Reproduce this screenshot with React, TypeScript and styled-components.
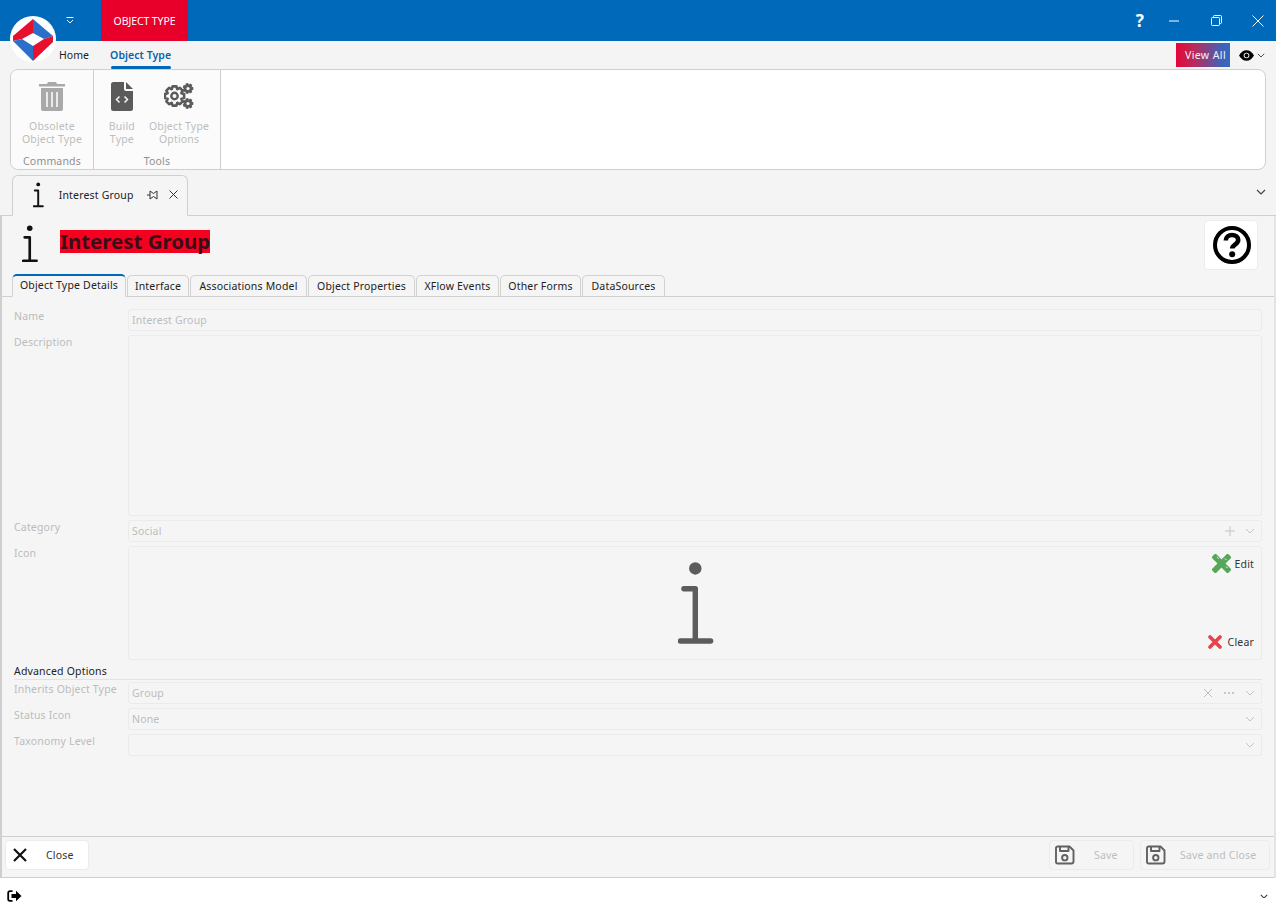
import React from 'react';
import styled, { createGlobalStyle } from 'styled-components';

const Global = createGlobalStyle`
  html, body { margin: 0; padding: 0; }
  body { font-family: "Noto Sans", "Open Sans", "Liberation Sans", sans-serif; font-size: 10.5px; letter-spacing: 0.18px; background: #f4f4f4; color: #222; }
  #root { height: 912px; }
  * { box-sizing: border-box; }
`;

const Page = styled.div`
  position: relative; width: 1276px; height: 912px; overflow: hidden;
  display: flex; flex-direction: column; background: #f4f4f4;
`;
const TitleBar = styled.header`
  height: 41px; flex: none; background: #0069b9; display: flex; align-items: stretch; padding-left: 64px; color: #fff;
`;
const QuickMenu = styled.button`
  all: unset; width: 12px; display: flex; align-items: center; justify-content: center; margin-right: 25px;
`;
const ContextTab = styled.div`
  width: 87px; background: #e8002a; color: #fff; display: flex; align-items: center; justify-content: center; font-size: 10.5px; letter-spacing: -0.1px;
`;
const WindowControls = styled.div`
  margin-left: auto; margin-right: -4px; display: flex; align-items: center;
`;
const WindowButton = styled.button<{ $w: number }>`
  all: unset; width: ${p => p.$w}px; height: 41px; display: flex; align-items: center; justify-content: center; color: #fff;
`;
const HelpMark = styled.span`
  font: 700 17px "Noto Sans", sans-serif;
`;
const LogoWrap = styled.div`
  position: absolute; left: 10px; top: 16px; width: 46px; height: 46px;
`;
const MenuRow = styled.nav`
  height: 28px; flex: none; display: flex; align-items: center; padding-left: 59px; position: relative;
`;
const MenuItem = styled.div<{ $active?: boolean }>`
  height: 28px; margin-right: 21px; display: flex; align-items: center; position: relative; font-size: 10.5px; letter-spacing: 0.05px;
  color: ${p => (p.$active ? '#0a62ab' : '#1f1f1f')}; font-weight: ${p => (p.$active ? 600 : 400)};
  &::after {
    content: ''; display: ${p => (p.$active ? 'block' : 'none')}; position: absolute; left: 1px; right: 0; bottom: 0; height: 3px; border-radius: 2px; background: #0069b9;
  }
`;
const MenuRight = styled.div`
  margin-left: auto; display: flex; align-items: center; padding-right: 11px;
`;
const ViewAll = styled.div`
  width: 54px; height: 24px; display: flex; align-items: center; justify-content: flex-end; padding-right: 4px; color: #f2f2f2; font-size: 10.5px; letter-spacing: 0.4px;
  background: linear-gradient(90deg, #e4073a 0%, #b92b5c 35%, #3f62ba 85%, #3569bf 100%);
`;
const EyeMenu = styled.div`
  display: flex; align-items: center; gap: 3px; margin-left: 9px;
`;
const Ribbon = styled.section`
  height: 101px; flex: none; margin: 0 10px; background: #fff; border: 1px solid #cfcfcf; border-radius: 8px; display: flex;
`;
const RibbonGroup = styled.div<{ $w: number }>`
  width: ${p => p.$w}px; border-right: 1px solid #cfcfcf; display: flex; flex-direction: column; align-items: center; background: #fbfbfb;
  &:first-child { border-radius: 8px 0 0 8px; }
`;
const GroupButtons = styled.div<{ $shift?: number }>`
  flex: 1; display: flex; justify-content: center; gap: 14px; padding: 11px 0 0 ${p => p.$shift ?? 0}px;
`;
const RibbonButton = styled.div`
  display: flex; flex-direction: column; align-items: center; text-align: center; color: #bdbdbd; line-height: 13px; font-size: 10.5px;
`;
const RibbonIcon = styled.div`
  height: 30px; margin-bottom: 9px; display: flex; align-items: center; justify-content: center;
`;
const GroupLabel = styled.div`
  height: 17px; color: #8f8f8f; font-size: 10.5px; line-height: 18px;
`;
const DocStrip = styled.div`
  height: 46px; flex: none; display: flex; align-items: flex-end; padding: 0 10px 2px 12px; border-bottom: 1px solid #d0d0d0; position: relative;
`;
const DocTab = styled.div`
  width: 176px; height: 41px; margin-bottom: -3px; background: #f5f5f5; border: 1px solid #cfcfcf; border-bottom: 1px solid #f5f5f5; border-radius: 6px 6px 0 0;
  display: flex; align-items: center; padding: 0 0 2px 20px; font-size: 10.5px; color: #222;
`;
const DocTabTitle = styled.span`
  margin-left: 15px; margin-right: 8px; width: 80px; white-space: nowrap;
`;
const DocTabAction = styled.span`
  width: 14px; height: 14px; margin-right: 7px; display: flex; align-items: center; justify-content: center;
`;
const StripChevron = styled.div`
  margin-left: auto; align-self: center; display: flex;
`;
const Panel = styled.main`
  flex: 1; min-height: 0; display: flex; flex-direction: column; background: #f5f5f5; border-left: 2px solid #cfcfcf; border-right: 2px solid #e4e4e4;
`;
const Heading = styled.div`
  height: 59px; flex: none; display: flex; align-items: flex-start; padding: 9px 16px 0 20px;
`;
const HeadingIcon = styled.div`
  width: 16px; margin-right: 22px; display: flex;
`;
const HeadingTitle = styled.h1`
  margin: 5px 0 0; padding: 0; height: 23px; background: #f6001f; color: #3b0d18; font: 700 20.45px/23px "Noto Sans", sans-serif; letter-spacing: 0; white-space: nowrap;
`;
const HelpButton = styled.div`
  margin-left: auto; width: 54px; height: 50px; margin-top: -5px; padding-left: 2px; background: #fff; border-radius: 4px; border: 1px solid #ececec; display: flex; align-items: center; justify-content: center;
`;
const TabBar = styled.div`
  height: 22px; flex: none; display: flex; align-items: flex-end; padding-left: 10px; border-bottom: 1px solid #d0d0d0;
`;
const FormTab = styled.div<{ $w: number; $active?: boolean }>`
  width: ${p => p.$w}px; height: ${p => (p.$active ? 22 : 21)}px; margin-right: 1px; display: flex; align-items: center; justify-content: center; white-space: nowrap; color: #222; font-size: 10.5px;
  border: 1px solid #d2d2d2; border-radius: 5px 5px 0 0; background: #f5f5f5;
  ${p => p.$active ? 'border-top: 2px solid #0069b9; border-bottom: 1px solid #f5f5f5; margin-bottom: -1px; height: 23px; padding-bottom: 3px;' : 'border-bottom: none;'}
`;
const Form = styled.div`
  flex: 1; min-height: 0; padding: 12px 12px 0 12px; display: flex; flex-direction: column; gap: 4px;
`;
const Row = styled.div<{ $h?: number }>`
  display: grid; grid-template-columns: 114px 1fr; height: ${p => p.$h ?? 22}px; flex: none;
`;
const Label = styled.label`
  color: #bcbcbc; font-size: 10.5px; line-height: 14px; white-space: nowrap;
`;
const Field = styled.div`
  border: 1px solid #ebebeb; border-radius: 3px; background: #f5f5f5; display: flex; align-items: center; padding: 0 6px 0 3px; color: #bcbcbc; font-size: 10.5px; position: relative;
`;
const FieldTools = styled.div`
  margin-left: auto; display: flex; align-items: center; gap: 10px;
`;
const IconGlyph = styled.div`
  position: absolute; left: 549px; top: 14px; display: flex;
`;
const IconAction = styled.div<{ $top?: number; $bottom?: number; $gap: number }>`
  position: absolute; right: 7px; ${p => (p.$top !== undefined ? `top: ${p.$top}px;` : '')} ${p => (p.$bottom !== undefined ? `bottom: ${p.$bottom}px;` : '')}
  display: flex; align-items: center; gap: ${p => p.$gap}px; color: #333; font-size: 10.5px;
`;
const SectionTitle = styled.div`
  height: 16px; flex: none; margin: 0 0 -2px 0; color: #222; font-size: 10.5px; line-height: 14px; border-bottom: 1px solid #e2e2e2;
`;
const Footer = styled.div`
  height: 42px; flex: none; display: flex; align-items: center; padding: 0 4px 4px 3px; gap: 6px; border-top: 1px solid #cfcfcf; border-bottom: 1px solid #cfcfcf;
`;
const FooterButton = styled.div<{ $w: number; $light?: boolean }>`
  width: ${p => p.$w}px; height: 30px; display: flex; align-items: center; border-radius: 4px; font-size: 10.5px;
  background: ${p => (p.$light ? '#fff' : '#f5f5f5')}; border: 1px solid ${p => (p.$light ? '#ececec' : '#ebebeb')}; color: ${p => (p.$light ? '#333' : '#bdbdbd')};
`;
const FooterIcon = styled.span<{ $w: number }>`
  width: ${p => p.$w}px; display: flex; justify-content: center; flex: none;
`;
const FooterLabel = styled.span<{ $ml: number }>`
  margin-left: ${p => p.$ml}px; white-space: nowrap;
`;
const Spacer = styled.div`
  flex: 1;
`;
const StatusBar = styled.footer`
  height: 34px; flex: none; background: #fff; display: flex; align-items: center; justify-content: space-between; padding: 2px 8px 0 7px;
`;

const Logo = () => (
  <svg width="46" height="46" viewBox="0 0 46 46">
    <circle cx="23" cy="23" r="23" fill="#fff" />
    <polygon points="3,20 23,3 23,17 12,23 3,25" fill="#e8112d" />
    <polygon points="23,3 43,20 34,23 23,17" fill="#2a6fc9" />
    <polygon points="3,25 12,23 23,30 23,45" fill="#2a6fc9" />
    <polygon points="23,45 23,30 34,23 43,20 43,26" fill="#e8112d" />
  </svg>
);
const InfoGlyph = ({ h, color = '#111', sw = 5.5 }: { h: number; color?: string; sw?: number }) => (
  <svg width={(h * 36) / 86} height={h} viewBox="0 0 36 86" fill="none">
    <circle cx="17.5" cy="7.5" r="6.3" fill={color} />
    <path d="M6 28H17.5V81M2.5 81H33" stroke={color} strokeWidth={sw} strokeLinecap="round" strokeLinejoin="round" />
  </svg>
);
const Chevron = ({ c = '#333', w = 10, sw = 1 }: { c?: string; w?: number; sw?: number }) => (
  <svg width={w} height={w * 0.6} viewBox="0 0 10 6" fill="none">
    <path d="M1 1l4 4 4-4" stroke={c} strokeWidth={sw} />
  </svg>
);
const gearPath = (cx: number, cy: number, r: number, n: number) => {
  const pts: string[] = [];
  for (let i = 0; i < n; i++) {
    const a = (i / n) * Math.PI * 2;
    const s = Math.PI / n;
    const p = (ang: number, rad: number) => `${(cx + Math.cos(ang) * rad).toFixed(2)} ${(cy + Math.sin(ang) * rad).toFixed(2)}`;
    pts.push(p(a - s * 0.95, r * 0.8), p(a - s * 0.5, r * 1.05), p(a + s * 0.5, r * 1.05), p(a + s * 0.95, r * 0.8));
  }
  return 'M' + pts.join('L') + 'Z';
};
const Gears = () => (
  <svg width="30" height="26" viewBox="0 0 30 26" fill="none">
    <path d={gearPath(10.5, 13, 9.3, 8)} stroke="#5b5b5b" strokeWidth="2.6" strokeLinejoin="round" />
    <circle cx="10.5" cy="13" r="3.2" stroke="#5b5b5b" strokeWidth="2.4" />
    <path d={gearPath(24, 5.5, 5.2, 7)} fill="#5b5b5b" />
    <circle cx="24" cy="5.5" r="1.6" fill="#fbfbfb" />
    <path d={gearPath(24, 20.5, 5.2, 7)} fill="#5b5b5b" />
    <circle cx="24" cy="20.5" r="1.6" fill="#fbfbfb" />
  </svg>
);
const Trash = () => (
  <svg width="26" height="29" viewBox="0 0 26 29">
    <path d="M9 0h8l1 2h8v2.4H0V2h8z" fill="#a9a9a9" />
    <path d="M2 6h22v21a2 2 0 0 1-2 2H4a2 2 0 0 1-2-2z" fill="#a9a9a9" />
    <path d="M8 10v15M13 10v15M18 10v15" stroke="#fbfbfb" strokeWidth="1.6" />
  </svg>
);
const CodeFile = () => (
  <svg width="22" height="29" viewBox="0 0 22 29">
    <path d="M2.5 0H13v7a2 2 0 0 0 2 2h7v17.5a2.5 2.5 0 0 1-2.5 2.5h-17A2.5 2.5 0 0 1 0 26.5v-24A2.5 2.5 0 0 1 2.5 0z" fill="#5b5b5b" />
    <path d="M15 0l7 7h-7z" fill="#5b5b5b" />
    <path d="M8.5 14.5L5.5 17.5l3 3M13.5 14.5l3 3-3 3" stroke="#f6f6f6" strokeWidth="1.5" fill="none" />
  </svg>
);
const Floppy = () => (
  <svg width="20" height="20" viewBox="0 0 20 20" fill="none" stroke="#616161" strokeWidth="1.9" strokeLinejoin="round">
    <path d="M2.5 1.5h12l4 4v11a2 2 0 0 1-2 2h-14a1.5 1.5 0 0 1-1.5-1.5V3a1.5 1.5 0 0 1 1.5-1.5z" />
    <path d="M5 1.5v4.5h8.5V1.5" />
    <circle cx="9.8" cy="12.7" r="2.7" />
  </svg>
);
const EditIcon = () => (
  <svg width="19" height="19" viewBox="0 0 19 19">
    <g transform="rotate(45 9.5 9.5)" fill="#58a55c">
      <rect x="6.6" y="-2" width="5.8" height="23" rx="0.6" />
      <rect x="-2" y="6.6" width="23" height="5.8" rx="0.6" />
    </g>
    <path d="M5 3.2l1.6 1.6M14 12.6l1.4 1.4M13 4.6l1.4 1.4" stroke="#f4f4f4" strokeWidth="1" />
  </svg>
);
const ClearIcon = () => (
  <svg width="14" height="14" viewBox="0 0 14 14">
    <path d="M2 2l10 10M12 2L2 12" stroke="#e8434c" strokeWidth="3.6" strokeLinecap="round" />
  </svg>
);
const Eye = () => (
  <svg width="15" height="11" viewBox="0 0 15 11">
    <path d="M0 5.5C2 2 4.6.3 7.5.3S13 2 15 5.5c-2 3.5-4.6 5.2-7.5 5.2S2 9 0 5.5z" fill="#000" />
    <circle cx="7.5" cy="5.5" r="2.8" fill="#f4f4f4" />
    <circle cx="7.5" cy="5.5" r="1.9" fill="#000" />
  </svg>
);
const PinIcon = () => (
  <svg width="11" height="10" viewBox="0 0 11 10" fill="none" stroke="#333" strokeWidth="1">
    <path d="M0 5h3M3 1v8l3.5-2.5L10 9V1L6.5 3.5z" />
  </svg>
);
const HelpCircle = () => (
  <svg width="38" height="38" viewBox="0 0 38 38" fill="none">
    <circle cx="19" cy="19" r="17" stroke="#000" strokeWidth="4" />
    <path d="M12.8 14.5c0-3.5 2.8-5.5 6.200-5.500s6.200 2 6.200 5c0 4.500-6 4.500-6 8.500" stroke="#000" strokeWidth="4.6" />
    <circle cx="19.2" cy="28.2" r="3" fill="#000" />
  </svg>
);
const ExitIcon = () => (
  <svg width="15" height="12" viewBox="0 0 15 12" fill="none">
    <path d="M5.5 1.2H3A1.8 1.8 0 0 0 1.2 3v6A1.8 1.8 0 0 0 3 10.8h2.5" stroke="#000" strokeWidth="1.8" />
    <path d="M9 .8L14.5 6 9 11.2V8H4.5V4H9z" fill="#000" />
  </svg>
);

const tabs: [string, number][] = [['Interface', 62], ['Associations Model', 117], ['Object Properties', 107], ['XFlow Events', 83], ['Other Forms', 81], ['DataSources', 83]];

export default function App() {
  return (
    <Page>
      <Global />
      <TitleBar>
        <QuickMenu>
          <svg width="8" height="7" viewBox="0 0 8 7" fill="none" stroke="#fff"><path d="M.5.5h7M1 3l3 3 3-3" /></svg>
        </QuickMenu>
        <ContextTab>OBJECT TYPE</ContextTab>
        <WindowControls>
          <WindowButton $w={24}><HelpMark>?</HelpMark></WindowButton>
          <WindowButton $w={44}>
            <svg width="10" height="2" viewBox="0 0 10 2"><path d="M0 1h10" stroke="#fff" /></svg>
          </WindowButton>
          <WindowButton $w={40}>
            <svg width="11" height="11" viewBox="0 0 11 11" fill="none" stroke="#fff"><rect x=".5" y="2.5" width="8" height="8" rx="1" /><path d="M2.5 2.5V1.5a1 1 0 0 1 1-1h6a1 1 0 0 1 1 1v6a1 1 0 0 1-1 1h-1" /></svg>
          </WindowButton>
          <WindowButton $w={44}>
            <svg width="12" height="12" viewBox="0 0 12 12" stroke="#fff"><path d="M.5.5l11 11M11.5.5l-11 11" /></svg>
          </WindowButton>
        </WindowControls>
      </TitleBar>
      <LogoWrap><Logo /></LogoWrap>
      <MenuRow>
        <MenuItem>Home</MenuItem>
        <MenuItem $active>Object Type</MenuItem>
        <MenuRight>
          <ViewAll>View All</ViewAll>
          <EyeMenu><Eye /><Chevron c="#444" w={8} sw={1.2} /></EyeMenu>
        </MenuRight>
      </MenuRow>
      <Ribbon>
        <RibbonGroup $w={83}>
          <GroupButtons>
            <RibbonButton><RibbonIcon><Trash /></RibbonIcon>Obsolete<br />Object Type</RibbonButton>
          </GroupButtons>
          <GroupLabel>Commands</GroupLabel>
        </RibbonGroup>
        <RibbonGroup $w={127}>
          <GroupButtons $shift={4}>
            <RibbonButton><RibbonIcon><CodeFile /></RibbonIcon>Build<br />Type</RibbonButton>
            <RibbonButton><RibbonIcon><Gears /></RibbonIcon>Object Type<br />Options</RibbonButton>
          </GroupButtons>
          <GroupLabel>Tools</GroupLabel>
        </RibbonGroup>
      </Ribbon>
      <DocStrip>
        <DocTab>
          <InfoGlyph h={26} sw={6.5} />
          <DocTabTitle>Interest Group</DocTabTitle>
          <DocTabAction><PinIcon /></DocTabAction>
          <DocTabAction>
            <svg width="9" height="9" viewBox="0 0 9 9" stroke="#333"><path d="M.5.5l8 8M8.5.5l-8 8" /></svg>
          </DocTabAction>
        </DocTab>
        <StripChevron><Chevron c="#444" w={10} sw={1.2} /></StripChevron>
      </DocStrip>
      <Panel>
        <Heading>
          <HeadingIcon><InfoGlyph h={38} sw={6} /></HeadingIcon>
          <HeadingTitle>Interest Group</HeadingTitle>
          <HelpButton><HelpCircle /></HelpButton>
        </Heading>
        <TabBar>
          <FormTab $w={114} $active>Object Type Details</FormTab>
          {tabs.map(([t, w]) => <FormTab key={t} $w={w}>{t}</FormTab>)}
        </TabBar>
        <Form>
          <Row><Label>Name</Label><Field>Interest Group</Field></Row>
          <Row $h={181}><Label>Description</Label><Field /></Row>
          <Row>
            <Label>Category</Label>
            <Field>Social
              <FieldTools>
                <svg width="10" height="10" viewBox="0 0 10 10" stroke="#c4c4c4"><path d="M5 0v10M0 5h10" /></svg>
                <Chevron c="#c4c4c4" />
              </FieldTools>
            </Field>
          </Row>
          <Row $h={114}>
            <Label>Icon</Label>
            <Field>
              <IconGlyph><InfoGlyph h={85} color="#5c5c5c" /></IconGlyph>
              <IconAction $top={7} $gap={3}><EditIcon />Edit</IconAction>
              <IconAction $bottom={10} $gap={6}><ClearIcon />Clear</IconAction>
            </Field>
          </Row>
          <SectionTitle>Advanced Options</SectionTitle>
          <Row>
            <Label>Inherits Object Type</Label>
            <Field>Group
              <FieldTools>
                <svg width="10" height="10" viewBox="0 0 10 10" stroke="#bdbdbd"><path d="M1 1l8 8M9 1l-8 8" /></svg>
                <svg width="12" height="4" viewBox="0 0 12 4" fill="#bdbdbd"><circle cx="2" cy="2" r="1.1" /><circle cx="6" cy="2" r="1.1" /><circle cx="10" cy="2" r="1.1" /></svg>
                <Chevron c="#c4c4c4" />
              </FieldTools>
            </Field>
          </Row>
          <Row>
            <Label>Status Icon</Label>
            <Field>None<FieldTools><Chevron c="#c4c4c4" /></FieldTools></Field>
          </Row>
          <Row>
            <Label>Taxonomy Level</Label>
            <Field><FieldTools><Chevron c="#c4c4c4" /></FieldTools></Field>
          </Row>
        </Form>
        <Footer>
          <FooterButton $w={84} $light>
            <FooterIcon $w={28}>
              <svg width="14" height="14" viewBox="0 0 14 14" stroke="#111" strokeWidth="2.2"><path d="M1 1l12 12M13 1L1 13" /></svg>
            </FooterIcon>
            <FooterLabel $ml={12}>Close</FooterLabel>
          </FooterButton>
          <Spacer />
          <FooterButton $w={85}><FooterIcon $w={30}><Floppy /></FooterIcon><FooterLabel $ml={14}>Save</FooterLabel></FooterButton>
          <FooterButton $w={130}><FooterIcon $w={30}><Floppy /></FooterIcon><FooterLabel $ml={9}>Save and Close</FooterLabel></FooterButton>
        </Footer>
      </Panel>
      <StatusBar>
        <ExitIcon />
        <Chevron c="#333" w={8} sw={1.3} />
      </StatusBar>
    </Page>
  );
}
